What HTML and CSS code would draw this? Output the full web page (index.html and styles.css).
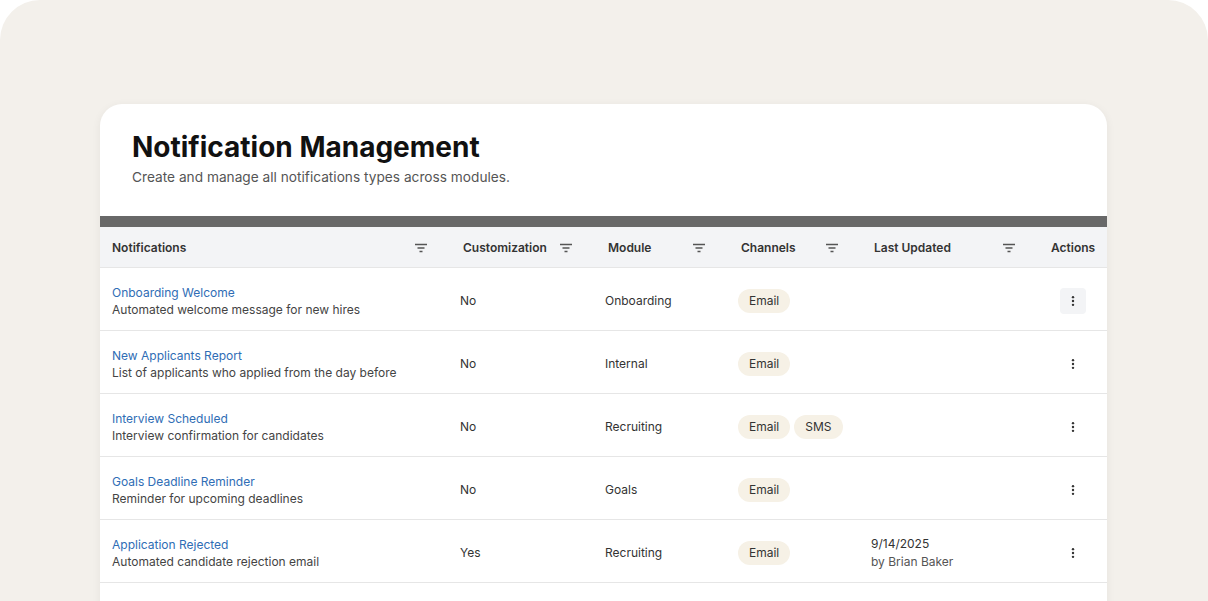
FILE: index.html
```html
<!DOCTYPE html>
<html lang="en">

<head>
  <meta charset="UTF-8">
  <meta name="viewport" content="width=device-width, initial-scale=1.0">
  <title>Notification Management</title>

  <link rel="stylesheet" href="styles.css">
</head>

<body>
  <div class="frame">
    <main class="card">
      <header class="card-head">
        <h1>Notification Management</h1>
        <p>Create and manage all notifications types across modules.</p>
      </header>

      <section class="table">
        <div class="row head">
          <div class="cell">Notifications <svg class="filter" viewBox="0 0 12 10"><path d="M0 1.5h12M2.5 5h7M4.5 8.5h3" /></svg></div>
          <div class="cell">Customization <svg class="filter" viewBox="0 0 12 10"><path d="M0 1.5h12M2.5 5h7M4.5 8.5h3" /></svg></div>
          <div class="cell">Module <svg class="filter" viewBox="0 0 12 10"><path d="M0 1.5h12M2.5 5h7M4.5 8.5h3" /></svg></div>
          <div class="cell">Channels <svg class="filter" viewBox="0 0 12 10"><path d="M0 1.5h12M2.5 5h7M4.5 8.5h3" /></svg></div>
          <div class="cell">Last Updated <svg class="filter" viewBox="0 0 12 10"><path d="M0 1.5h12M2.5 5h7M4.5 8.5h3" /></svg></div>
          <div class="cell actions-head">Actions</div>
        </div>

        <div class="row">
          <div class="cell name">
            <a href="#">Onboarding Welcome</a>
            <span>Automated welcome message for new hires</span>
          </div>
          <div class="cell">No</div>
          <div class="cell">Onboarding</div>
          <div class="cell chips"><span class="chip">Email</span></div>
          <div class="cell"></div>
          <div class="cell act"><button class="kebab active"><svg viewBox="0 0 4 14"><circle cx="2" cy="2.5" r="1.4" /><circle cx="2" cy="7" r="1.4" /><circle cx="2" cy="11.5" r="1.4" /></svg></button></div>
        </div>

        <div class="row">
          <div class="cell name">
            <a href="#">New Applicants Report</a>
            <span>List of applicants who applied from the day before</span>
          </div>
          <div class="cell">No</div>
          <div class="cell">Internal</div>
          <div class="cell chips"><span class="chip">Email</span></div>
          <div class="cell"></div>
          <div class="cell act"><button class="kebab"><svg viewBox="0 0 4 14"><circle cx="2" cy="2.5" r="1.4" /><circle cx="2" cy="7" r="1.4" /><circle cx="2" cy="11.5" r="1.4" /></svg></button></div>
        </div>

        <div class="row">
          <div class="cell name">
            <a href="#">Interview Scheduled</a>
            <span>Interview confirmation for candidates</span>
          </div>
          <div class="cell">No</div>
          <div class="cell">Recruiting</div>
          <div class="cell chips"><span class="chip">Email</span><span class="chip">SMS</span></div>
          <div class="cell"></div>
          <div class="cell act"><button class="kebab"><svg viewBox="0 0 4 14"><circle cx="2" cy="2.5" r="1.4" /><circle cx="2" cy="7" r="1.4" /><circle cx="2" cy="11.5" r="1.4" /></svg></button></div>
        </div>

        <div class="row">
          <div class="cell name">
            <a href="#">Goals Deadline Reminder</a>
            <span>Reminder for upcoming deadlines</span>
          </div>
          <div class="cell">No</div>
          <div class="cell">Goals</div>
          <div class="cell chips"><span class="chip">Email</span></div>
          <div class="cell"></div>
          <div class="cell act"><button class="kebab"><svg viewBox="0 0 4 14"><circle cx="2" cy="2.5" r="1.4" /><circle cx="2" cy="7" r="1.4" /><circle cx="2" cy="11.5" r="1.4" /></svg></button></div>
        </div>

        <div class="row">
          <div class="cell name">
            <a href="#">Application Rejected</a>
            <span>Automated candidate rejection email</span>
          </div>
          <div class="cell">Yes</div>
          <div class="cell">Recruiting</div>
          <div class="cell chips"><span class="chip">Email</span></div>
          <div class="cell updated">
            <span>9/14/2025</span>
            <span class="by">by Brian Baker</span>
          </div>
          <div class="cell act"><button class="kebab"><svg viewBox="0 0 4 14"><circle cx="2" cy="2.5" r="1.4" /><circle cx="2" cy="7" r="1.4" /><circle cx="2" cy="11.5" r="1.4" /></svg></button></div>
        </div>

        <div class="row"></div>
      </section>
    </main>
  </div>
</body>

</html>
```

FILE: styles.css
```css
body {
  background: #fff;
  font-family: "Inter", "Liberation Sans", sans-serif;
  margin: 0;
}

.frame {
  background: #f3f0eb;
  border-radius: 40px 40px 0 0;
  box-sizing: border-box;
  height: 601px;
  overflow: hidden;
  padding: 104px 101px 0 100px;
}

.card {
  background: #fff;
  border-radius: 22px 22px 0 0;
  box-shadow: 0 2px 10px rgba(0, 0, 0, 0.06);
  overflow: hidden;
}

.card-head {
  padding: 26px 32px 29px;
}

.card-head h1 {
  color: #111;
  font-size: 28px;
  font-weight: 700;
  line-height: 34px;
  margin: 0 0 3px;
}

.card-head p {
  color: #555;
  font-size: 13.7px;
  line-height: 20px;
  margin: 0;
}

.table {
  border-top: 11px solid #686868;
}

.row {
  border-bottom: 1px solid #e6e6e6;
  box-sizing: border-box;
  display: grid;
  grid-template-columns: 351px 145px 133px 133px 177px 68px;
  height: 63px;
  padding-top: 3px;
}

.row.head {
  background: #f3f4f6;
  height: 41px;
  padding-top: 1px;
}

.cell {
  align-items: center;
  color: #333;
  display: flex;
  font-size: 12px;
  padding-left: 9px;
}

.head .cell {
  color: #333;
  font-weight: 600;
  justify-content: space-between;
  padding: 0 24px 0 12px;
}

.head .actions-head {
  justify-content: flex-start;
  padding: 0 0 0 12px;
}

.filter {
  fill: none;
  height: 10px;
  stroke: #555;
  stroke-width: 1.5;
  width: 12px;
}

.cell.name {
  align-items: flex-start;
  flex-direction: column;
  justify-content: center;
  padding-left: 12px;
}

.name a {
  color: #2f6db5;
  line-height: 17px;
  text-decoration: none;
}

.name span {
  color: #444;
  line-height: 17px;
}

.chips {
  gap: 4px;
}

.chip {
  background: #f6f1e6;
  border-radius: 12px;
  color: #333;
  line-height: 24px;
  padding: 0 11px;
}

.updated {
  align-items: flex-start;
  flex-direction: column;
  justify-content: center;
}

.updated span {
  line-height: 18px;
}

.updated .by {
  color: #555;
}

.act {
  justify-content: center;
  padding-left: 0;
}

.kebab {
  align-items: center;
  background: none;
  border: none;
  border-radius: 4px;
  display: flex;
  height: 26px;
  justify-content: center;
  padding: 0;
  width: 26px;
}

.kebab.active {
  background: #f3f4f6;
}

.kebab svg {
  fill: #333;
  height: 12px;
  width: 4px;
}
```
